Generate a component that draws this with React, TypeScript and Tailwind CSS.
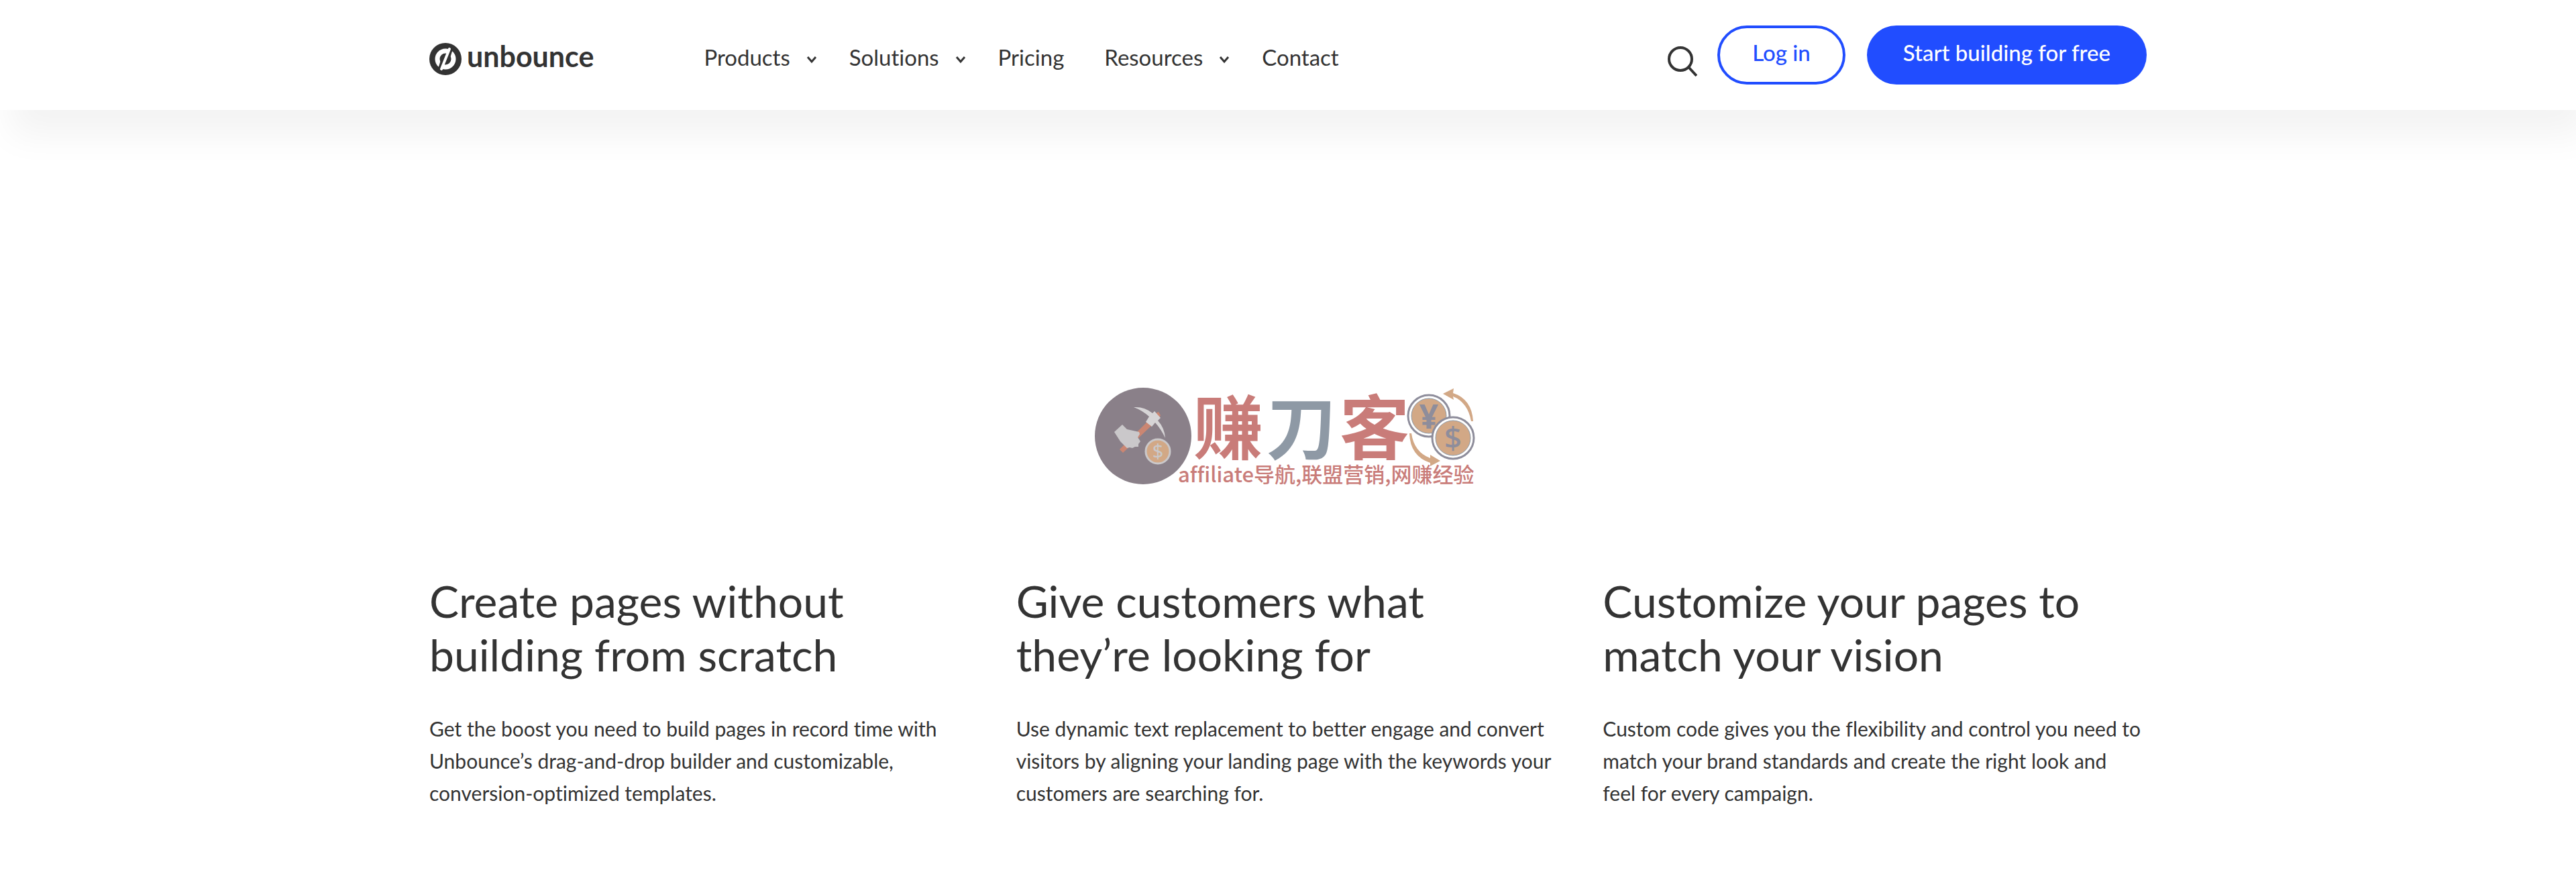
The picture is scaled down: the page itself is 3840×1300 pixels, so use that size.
import React from 'react';

interface NavItem {
  label: string;
  hasMenu: boolean;
}

interface Feature {
  title: string;
  text: string;
}

const navItems: NavItem[] = [
  { label: 'Products', hasMenu: true },
  { label: 'Solutions', hasMenu: true },
  { label: 'Pricing', hasMenu: false },
  { label: 'Resources', hasMenu: true },
  { label: 'Contact', hasMenu: false },
];

const features: Feature[] = [
  {
    title: 'Create pages without building from scratch',
    text: 'Get the boost you need to build pages in record time with Unbounce’s drag-and-drop builder and customizable, conversion-optimized templates.',
  },
  {
    title: 'Give customers what they’re looking for',
    text: 'Use dynamic text replacement to better engage and convert visitors by aligning your landing page with the keywords your customers are searching for.',
  },
  {
    title: 'Customize your pages to match your vision',
    text: 'Custom code gives you the flexibility and control you need to match your brand standards and create the right look and feel for every campaign.',
  },
];

const UnbounceLogo: React.FC = () => (
  <a href="#" className="flex items-center gap-2 pt-3">
    <svg viewBox="0 0 48 48" className="w-12 h-12" aria-hidden="true">
      <circle cx="24" cy="24" r="24" fill="#333333" />
      <circle cx="24" cy="24" r="12" fill="none" stroke="#ffffff" strokeWidth="7" />
      {/* Dark gaps on both sides of the slash */}
      <path d="M34 6 L29 22" stroke="#333333" strokeWidth="4" />
      <path d="M14 42 L19 26" stroke="#333333" strokeWidth="4" />
      <path d="M30 9 L18 39" stroke="#ffffff" strokeWidth="4" strokeLinecap="round" />
    </svg>
    <span className="pb-2 text-[43px] leading-[48px] font-bold">unbounce</span>
  </a>
);

const Chevron: React.FC = () => (
  <svg viewBox="0 0 16 12" className="w-4 h-3 mt-2" fill="none" aria-hidden="true">
    <path d="M2 2 L8 9 L14 2" stroke="#333333" strokeWidth="3" />
  </svg>
);

const Header: React.FC = () => (
  <header className="relative bg-white shadow-[16px_38px_50px_rgba(0,0,0,0.05)]">
    <div className="w-full max-w-[2560px] mx-auto py-[38px] flex items-center">
      <UnbounceLogo />

      <nav className="ml-[164px] pt-1.5 flex items-center gap-12 text-[33px] leading-[40px]">
        {navItems.map((item) =>
          item.hasMenu ? (
            <button key={item.label} type="button" className="flex items-center gap-6 cursor-pointer">
              {item.label}
              <Chevron />
            </button>
          ) : (
            <a key={item.label} href="#" className="pr-3">
              {item.label}
            </a>
          )
        )}
      </nav>

      <div className="ml-auto flex items-center">
        <button type="button" aria-label="Search" className="pt-5 mr-[30px] cursor-pointer">
          <svg viewBox="0 0 44 46" className="w-11 h-[46px]" fill="none" aria-hidden="true">
            <circle cx="19" cy="19" r="17" stroke="#333333" strokeWidth="4" />
            <path d="M31 31 L43 44" stroke="#333333" strokeWidth="4" />
          </svg>
        </button>
        <a
          href="#"
          className="h-[88px] px-12 pb-2 mr-8 flex items-center rounded-full border-4 border-[#214dff] text-[33px] leading-[40px] font-medium text-[#214dff]"
        >
          Log in
        </a>
        <a
          href="#"
          className="h-[88px] px-[54px] pb-2 flex items-center rounded-full bg-[#214dff] text-[33px] leading-[40px] font-medium text-white"
        >
          Start building for free
        </a>
      </div>
    </div>
  </header>
);

const PartnerLogo: React.FC = () => (
  <svg viewBox="0 0 568 144" className="w-[568px] h-36 overflow-visible" role="img" aria-label="赚刀客">
    {/* Round badge with pickaxe, hand and coin */}
    <circle cx="72" cy="72" r="72" fill="#8a8089" />
    <path d="M79 50 L85 56 L42 97 L37 92 Z" fill="#cb8672" />
    <path d="M91 38 L95 36 L98 41 L96 45 Z" fill="#cb8672" />
    <path d="M58 29 Q74 28 86 38 L89 35 L98 45 L94 49 Q104 60 105 75 Q99 62 90 52 L85 58 L76 51 L81 43 Q71 34 58 29 Z" fill="#d6d4d6" />
    <path d="M41 55 L29 66 L38 80 L48 90 L52 89 L56 90 L60 88 L65 88 L65 84 L68 80 L64 74 L67 69 L66 66 L48 62 Z" fill="#cac8ca" />
    <circle cx="94" cy="95" r="18" fill="#d2a886" stroke="#cac8ca" strokeWidth="3" />
    <text x="94" y="105" textAnchor="middle" fontSize="29" fill="#cac8ca" className="font-['Noto_Sans',sans-serif]">
      $
    </text>

    <g fontSize="104" className="font-bold font-['Noto_Sans_CJK_SC',sans-serif]">
      <text x="147" y="99" fill="#c97c79">赚</text>
      <text x="256" y="99" fill="#8e99a5">刀</text>
      <text x="365" y="99" fill="#c97c79">客</text>
    </g>

    {/* Exchange coins */}
    <g fill="#d2a886">
      <circle cx="498" cy="42" r="31" fill="#ffffff" stroke="#8e8d9b" strokeWidth="3" />
      <circle cx="498" cy="42" r="26" stroke="#8e99a5" strokeWidth="1" />
      <text x="498" y="61" textAnchor="middle" fontSize="50" fill="#8e8d9b" className="font-bold font-['Noto_Sans',sans-serif]">
        ¥
      </text>
      <circle cx="534" cy="75" r="31" fill="#ffffff" stroke="#8e8d9b" strokeWidth="3" />
      <circle cx="534" cy="75" r="26" stroke="#8e99a5" strokeWidth="1" />
      <text x="534" y="91" textAnchor="middle" fontSize="46" fill="#8e8d9b" className="font-medium font-['Noto_Sans',sans-serif]">
        $
      </text>
      <path d="M519 9 L535 1 L534 8 Q562 17 564 50 L561 50 Q556 22 534 13 L535 18 Z" />
      <path d="M469 68 L472 68 Q476 96 500 105 L500 100 L515 109 L500 117 L500 112 Q470 102 469 68 Z" />
    </g>

    <text x="124" y="141" fontSize="31" fill="#c97c79" className="font-medium font-['Noto_Sans_CJK_SC',sans-serif]">
      affiliate导航,联盟营销,网赚经验
    </text>
  </svg>
);

const FeatureCard: React.FC<Feature> = ({ title, text }) => (
  <div>
    <h2 className="pr-10 text-[66px] leading-[80px]">{title}</h2>
    <p className="mt-[46px] pr-2 text-[30px] leading-[48px]">{text}</p>
  </div>
);

const App: React.FC = () => {
  return (
    <div className="min-h-screen bg-white text-[#333333] font-['Lato',sans-serif] [font-variant-ligatures:none]">
      <Header />
      <main className="w-full max-w-[2560px] mx-auto pt-[414px] pb-20">
        <div className="flex justify-center pr-2">
          <PartnerLogo />
        </div>
        <div className="mt-[134px] grid grid-cols-3 gap-16">
          {features.map((feature) => (
            <FeatureCard key={feature.title} {...feature} />
          ))}
        </div>
      </main>
    </div>
  );
};

export default App;
